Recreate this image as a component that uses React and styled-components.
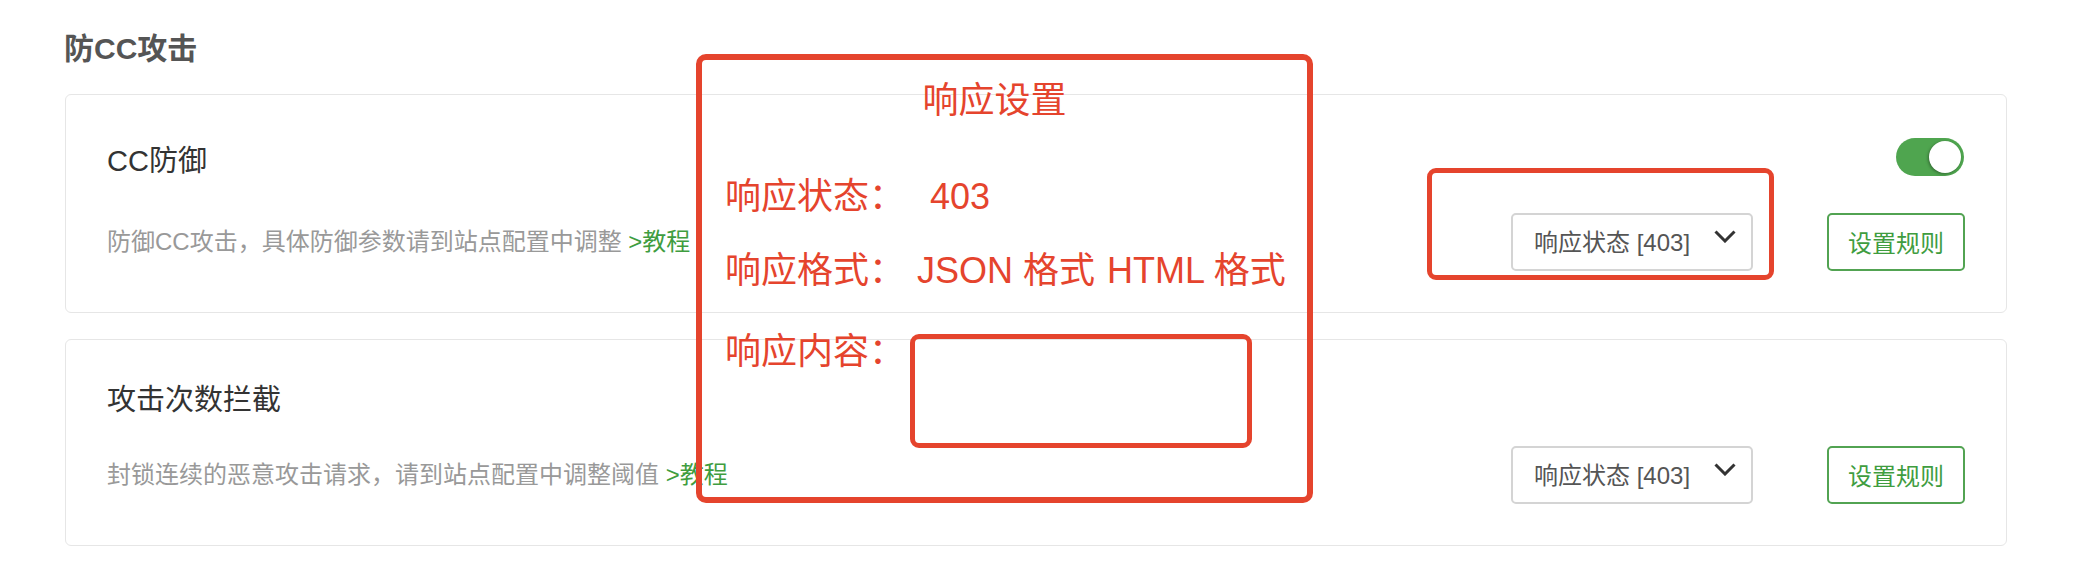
import React from "react";
import styled, { createGlobalStyle } from "styled-components";

const Global = createGlobalStyle`
  html, body { margin: 0; padding: 0; background: #fff; }
  * { box-sizing: border-box; }
`;

const FONT = `"Liberation Sans", "Noto Sans CJK SC", sans-serif`;

const Page = styled.div`
  position: relative;
  padding: 29px 71px 16px 65px;
  font-family: ${FONT};
`;

const Heading = styled.h2`
  margin: 0 0 25px -1px;
  font-size: 30px;
  line-height: 40px;
  font-weight: 700;
  color: #555;
`;

const Stack = styled.div`
  display: flex;
  flex-direction: column;
  gap: 26px;
`;

const Card = styled.section`
  border: 1px solid #e6e6e6;
  border-radius: 6px;
  padding: 39px 41px 41px 41px;
  display: flex;
  flex-direction: column;
  gap: 25px;
`;

const HeadRow = styled.div`
  display: flex;
  align-items: center;
  justify-content: space-between;
  min-height: ${(p) => (p.$tall ? "54px" : "42px")};
`;

const Title = styled.div`
  font-size: 29px;
  line-height: 42px;
  color: #333;
`;

const BodyRow = styled.div`
  display: flex;
  align-items: center;
  justify-content: space-between;
`;

const Desc = styled.div`
  font-size: 24px;
  line-height: 34px;
  color: #999;
`;

const Link = styled.a`
  color: #3f9d3f;
  text-decoration: none;
`;

const Controls = styled.div`
  display: flex;
  align-items: center;
  gap: 74px;
`;

const Select = styled.div`
  width: 242px;
  height: 58px;
  border: 2px solid #d4d4d4;
  border-radius: 5px;
  display: flex;
  align-items: center;
  justify-content: space-between;
  padding: 0 15px 4px 21px;
  font-size: 24px;
  color: #555;
`;

const Chevron = styled.svg`
  width: 22px;
  height: 13px;
  margin-top: -8px;
`;

const Button = styled.button`
  width: 138px;
  height: 58px;
  border: 2px solid #52a352;
  border-radius: 5px;
  background: #fff;
  color: #3f9d3f;
  font-family: ${FONT};
  font-size: 24px;
  padding: 0 0 2px 0;
`;

const Toggle = styled.div`
  width: 68px;
  height: 38px;
  border-radius: 19px;
  background: #4fa54f;
  margin-bottom: 8px;
  margin-right: 1px;
  display: flex;
  align-items: center;
  justify-content: flex-end;
  padding-right: 3px;
`;

const Knob = styled.div`
  width: 32px;
  height: 32px;
  border-radius: 50%;
  background: #fff;
  box-shadow: -1px 1px 3px rgba(0, 0, 0, 0.35);
`;

/* ---- red annotation overlay ---- */
const RED = "#e5442d";

const Annotation = styled.div`
  position: absolute;
  left: ${(p) => p.$x}px;
  top: ${(p) => p.$y}px;
  width: ${(p) => p.$w}px;
  height: ${(p) => p.$h}px;
  border: ${(p) => p.$b}px solid ${RED};
  border-radius: ${(p) => p.$r}px;
  pointer-events: none;
`;

const Panel = styled(Annotation)`
  padding: 19px 0 0 23px;
  display: flex;
  flex-direction: column;
  color: ${RED};
  font-size: 36px;
  line-height: 44px;
`;

const PanelTitle = styled.div`
  text-align: center;
  margin-left: -43px;
  margin-bottom: 52px;
`;

const FieldRow = styled.div`
  display: grid;
  grid-template-columns: 185px 1fr;
  align-items: start;
  margin-top: ${(p) => p.$mt || 0}px;
`;

const Label = styled.span``;

const Value = styled.div`
  display: flex;
  padding-left: ${(p) => p.$indent || 0}px;
  gap: 12px;
`;

const TextBox = styled.div`
  width: 342px;
  height: 114px;
  border: 5px solid ${RED};
  border-radius: 9px;
  margin-top: 4px;
`;

const rows = [
  {
    title: "CC防御",
    desc: "防御CC攻击，具体防御参数请到站点配置中调整",
    toggle: true,
  },
  {
    title: "攻击次数拦截",
    desc: "封锁连续的恶意攻击请求，请到站点配置中调整阈值",
    toggle: false,
  },
];

export default function App() {
  return (
    <>
      <Global />
      <Page>
        <Heading>防CC攻击</Heading>
        <Stack>
          {rows.map((r) => (
            <Card key={r.title}>
              <HeadRow $tall={r.toggle}>
                <Title>{r.title}</Title>
                {r.toggle && (
                  <Toggle>
                    <Knob />
                  </Toggle>
                )}
              </HeadRow>
              <BodyRow>
                <Desc>
                  {r.desc} <Link href="#">&gt;教程</Link>
                </Desc>
                <Controls>
                  <Select>
                    <span>响应状态 [403]</span>
                    <Chevron viewBox="0 0 22 13">
                      <polyline
                        points="1.5,1.5 11,11 20.5,1.5"
                        fill="none"
                        stroke="#333"
                        strokeWidth="3"
                      />
                    </Chevron>
                  </Select>
                  <Button>设置规则</Button>
                </Controls>
              </BodyRow>
            </Card>
          ))}
        </Stack>

        <Panel $x={696} $y={54} $w={617} $h={449} $b={6} $r={10}>
          <PanelTitle>响应设置</PanelTitle>
          <FieldRow>
            <Label>响应状态：</Label>
            <Value $indent={20}>403</Value>
          </FieldRow>
          <FieldRow $mt={30}>
            <Label>响应格式：</Label>
            <Value $indent={7}>
              <span>JSON 格式</span>
              <span>HTML 格式</span>
            </Value>
          </FieldRow>
          <FieldRow $mt={37}>
            <Label>响应内容：</Label>
            <TextBox />
          </FieldRow>
        </Panel>
        <Annotation $x={1427} $y={168} $w={347} $h={112} $b={5} $r={9} />
      </Page>
    </>
  );
}
